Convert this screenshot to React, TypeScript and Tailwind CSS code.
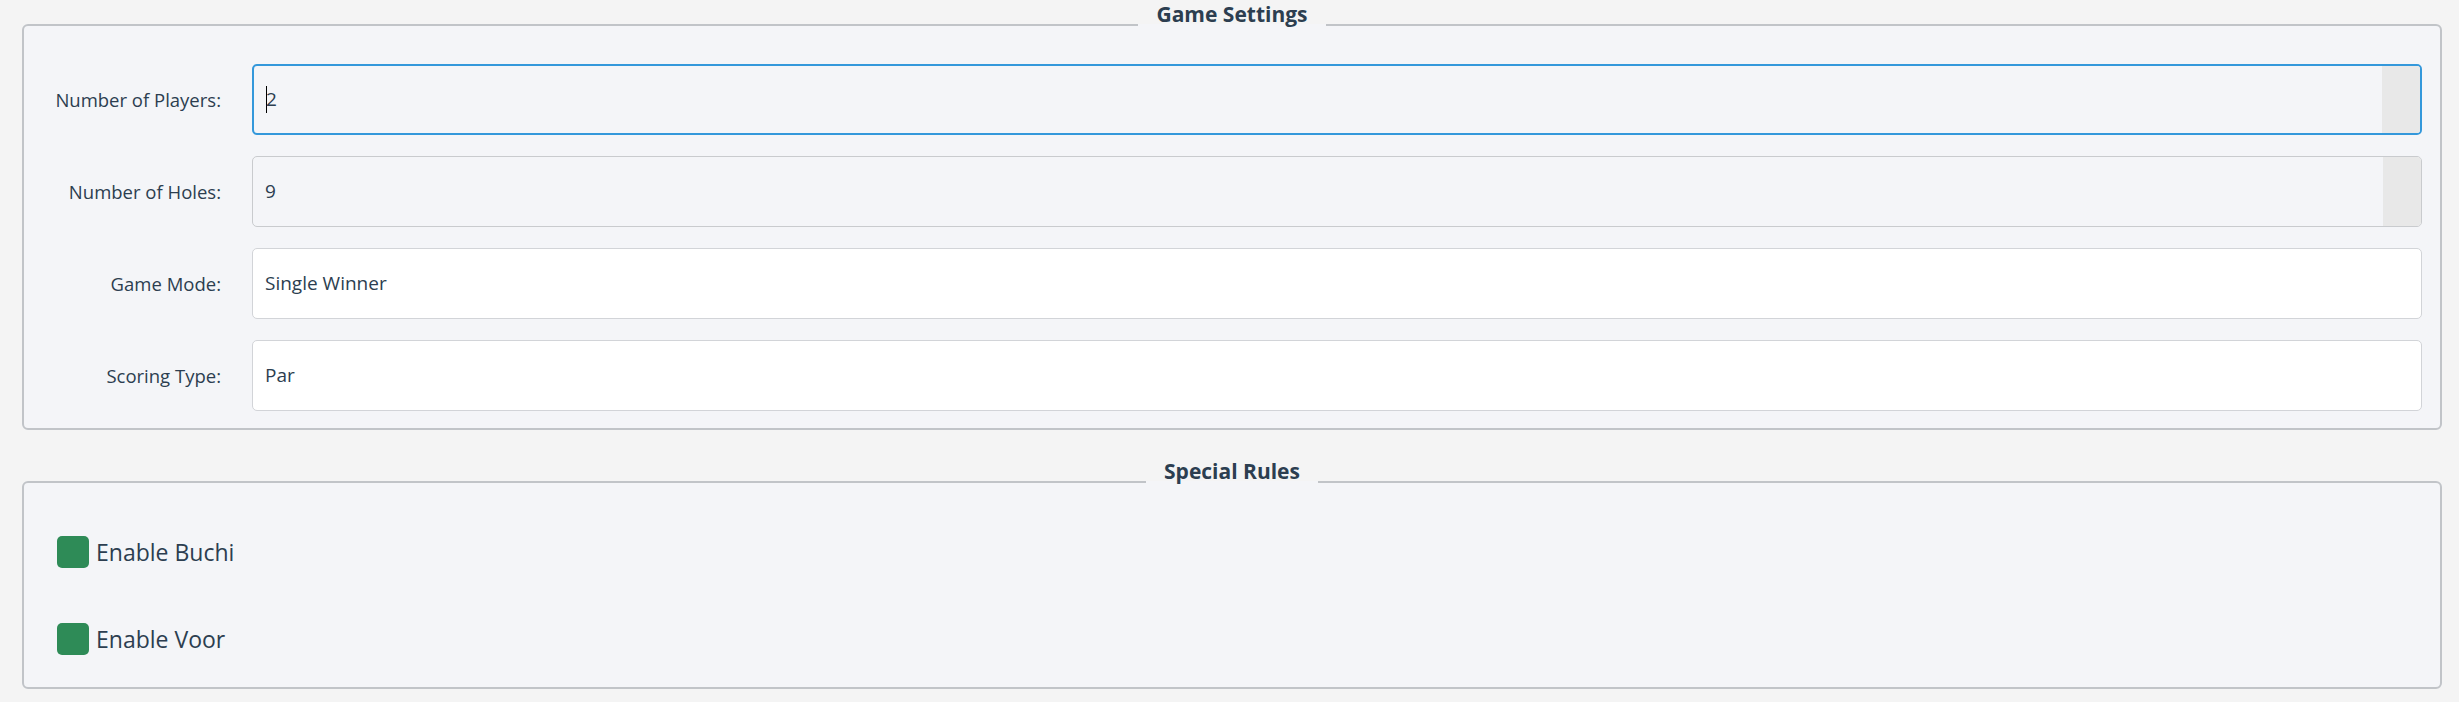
import React from "react";

const font = { fontFamily: '"Open Sans", "Noto Sans", sans-serif' };

function SettingRow({
  label,
  value,
  focused,
  numeric,
}: {
  label: string;
  value: string;
  focused?: boolean;
  numeric?: boolean;
}) {
  return (
    <div className="flex items-center">
      <label className="w-[179px] mr-[31px] text-right text-[18.5px] text-[#2c3e50]">{label}</label>
      <div
        className={
          focused
            ? "flex-1 h-[71px] flex rounded-[5px] border-2 border-[#3498db] bg-[#f4f5f8] overflow-hidden"
            : numeric
            ? "flex-1 h-[71px] flex rounded-[5px] border border-[#c9cbce] bg-[#f4f5f8] overflow-hidden"
            : "flex-1 h-[71px] flex rounded-[5px] border border-[#d2d4d8] bg-white overflow-hidden"
        }
      >
        <div className="flex-1 flex items-center pl-[12px] text-[19px] text-[#2c3e50]">
          {focused && <span className="w-px h-[27px] bg-black mr-[-1px]" />}
          {value}
        </div>
        {numeric && <div className="w-[38px] bg-[#e8e8e8]" />}
      </div>
    </div>
  );
}

function Checkbox({ label }: { label: string }) {
  return (
    <div className="flex items-center gap-[7px] h-[32px]">
      <span className="w-[32px] h-[32px] rounded-[5px] bg-[#2e8b57]" />
      <span className="text-[23px] text-[#2c3e50]">{label}</span>
    </div>
  );
}

export default function App() {
  return (
    <div className="min-h-[702px] w-full bg-[#f4f4f4] pl-[22px] pr-[17px] pt-[2px]" style={font}>
      <fieldset className="border-2 border-[#c1c4c8] rounded-[6px] bg-[#f4f5f8] px-[18px] pb-[17px]">
        <legend className="mx-auto px-[18px] text-[21px] font-bold leading-[24px] pb-[22px] text-[#2c3e50]">
          Game Settings
        </legend>
        <div className="flex flex-col gap-[21px] pt-[16px]">
          <SettingRow label="Number of Players:" value="2" focused numeric />
          <SettingRow label="Number of Holes:" value="9" numeric />
          <SettingRow label="Game Mode:" value="Single Winner" />
          <SettingRow label="Scoring Type:" value="Par" />
        </div>
      </fieldset>

      <fieldset className="mt-[29px] border-2 border-[#c1c4c8] rounded-[6px] bg-[#f4f5f8] px-[18px] pb-[32px]">
        <legend className="mx-auto px-[18px] text-[21px] font-bold leading-[24px] pb-[22px] text-[#2c3e50]">
          Special Rules
        </legend>
        <div className="flex flex-col gap-[55px] pt-[31px] pl-[15px]">
          <Checkbox label="Enable Buchi" />
          <Checkbox label="Enable Voor" />
        </div>
      </fieldset>
    </div>
  );
}
